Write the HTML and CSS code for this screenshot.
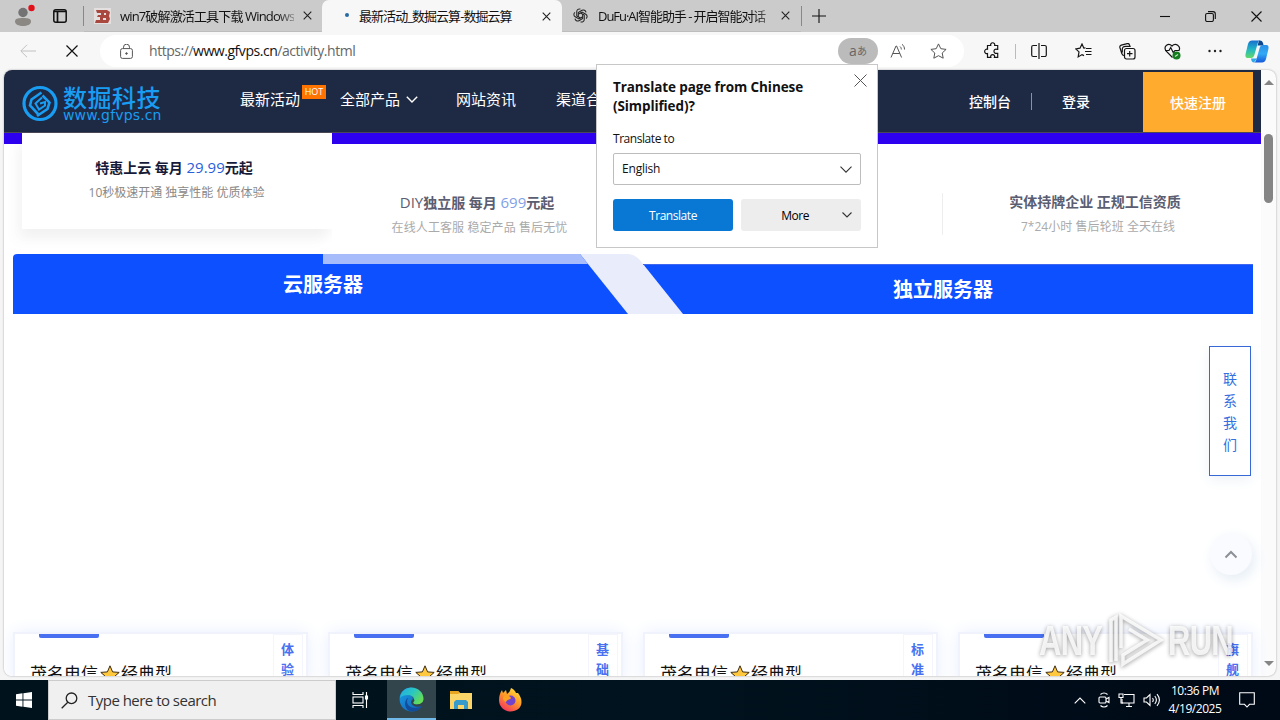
FILE: index.html
```html
<!DOCTYPE html>
<html lang="zh-CN">
<head>
<meta charset="utf-8">
<title>最新活动_数掘云算-数掘云算</title>
<link rel="stylesheet" href="styles.css">
</head>
<body>
<div class="tabbar">
  <svg class="avatar" width="22" height="24" viewBox="0 0 22 24"><circle cx="9" cy="8.500" r="4.700" fill="#737373"/><path d="M1 17.500c0-3 3-3.500 8-3.500s8 .5 8 3.500-4 4.500-8 4.500-8-1.500-8-4.500z" fill="#8b8782"/><circle cx="17.500" cy="4" r="3.200" fill="#e3101c"/></svg>
  <svg class="workspaces" width="14" height="14" viewBox="0 0 14 14"><rect x=".8" y=".8" width="12.400" height="12.400" rx="2" fill="none" stroke="#111" stroke-width="1.500"/><path d="M1 2.500h12M4.500 3v10" stroke="#111" stroke-width="1.700"/></svg>
  <i class="divider"></i>
  <div class="tab tab-one">
    <svg width="17" height="16" viewBox="0 0 17 16"><rect width="17" height="16" fill="#e4e0df"/><path fill-rule="evenodd" d="M2 2h11l3 2-1 4 1 3-2 4H1l1-3h4V9H3l1-2h3V5H3zM10 5v2h2V5zM9 10v2h3v-2z" fill="#a8483f"/></svg>
    <span class="tab-title fade">win7破解激活工具下载 Windows</span>
    <svg class="x" width="9" height="9" viewBox="0 0 9 9"><path d="M.7.7l7.600 7.600M8.300.7L.7 8.300"/></svg>
  </div>
  <div class="tab tab-active">
    <i class="loading"></i>
    <span class="tab-title">最新活动_数掘云算-数掘云算</span>
    <svg class="x" width="9" height="9" viewBox="0 0 9 9"><path d="M.7.7l7.600 7.600M8.300.7L.7 8.300"/></svg>
  </div>
  <div class="tab tab-three">
    <svg width="15" height="15" viewBox="0 0 16 16" fill="none" stroke="#222" stroke-width="1.100"><path d="M8 1.200c-2-.8-4 .6-4 2.600v4.600l4 2.300"/><path d="M8 1.200c-2-.8-4 .6-4 2.600v4.600l4 2.300" transform="rotate(60 8 8)"/><path d="M8 1.200c-2-.8-4 .6-4 2.600v4.600l4 2.300" transform="rotate(120 8 8)"/><path d="M8 1.200c-2-.8-4 .6-4 2.600v4.600l4 2.300" transform="rotate(180 8 8)"/><path d="M8 1.200c-2-.8-4 .6-4 2.600v4.600l4 2.300" transform="rotate(240 8 8)"/><path d="M8 1.200c-2-.8-4 .6-4 2.600v4.600l4 2.300" transform="rotate(300 8 8)"/></svg>
    <span class="tab-title fade">DuFu·AI智能助手 - 开启智能对话</span>
    <svg class="x" width="9" height="9" viewBox="0 0 9 9"><path d="M.7.7l7.600 7.600M8.300.7L.7 8.300"/></svg>
  </div>
  <i class="divider"></i>
  <svg class="plus" width="14" height="14" viewBox="0 0 14 14"><path d="M7 0v14M0 7h14"/></svg>
  <div class="window-buttons">
    <svg width="10" height="10" viewBox="0 0 10 10"><path d="M0 5.500h10"/></svg>
    <svg width="11" height="11" viewBox="0 0 11 11"><rect x=".6" y="2.500" width="7.800" height="8" rx="1.500"/><path d="M3 .6h5a2.300 2.300 0 0 1 2.300 2.300V8"/></svg>
    <svg width="11" height="11" viewBox="0 0 11 11"><path d="M.5.5l10 10M10.500.5l-10 10"/></svg>
  </div>
</div>

<div class="toolbar">
  <svg class="back" width="16" height="14" viewBox="0 0 16 14"><path d="M16 7H1M7 .8L.8 7 7 13.200"/></svg>
  <svg class="stop" width="12" height="12" viewBox="0 0 12 12"><path d="M.5.5l11 11M11.500.5l-11 11"/></svg>
  <div class="address">
    <svg class="lock" width="13" height="15" viewBox="0 0 13 15"><rect x=".6" y="4.600" width="11.800" height="9.800" rx="1.800"/><path d="M3.500 4.500V3.200a3 3 0 0 1 6 0v1.300"/><circle cx="6.500" cy="9.500" r=".8" fill="#555"/></svg>
    <span class="url">https://<b>www.gfvps.cn</b>/activity.html</span>
    <span class="translate-chip"><span>a</span><small>あ</small></span>
    <svg class="read" width="18" height="16" viewBox="0 0 18 16"><path d="M1 14.500L6 3h.6l5 11.500M2.800 10.500h7M10 3.500c1 .8 1.300 1.800 1.300 3M12 1.300c1.800 1.400 2.500 3 2.500 5.200"/></svg>
    <svg class="fav" width="17" height="16" viewBox="0 0 17 16"><path d="M8.500.9l2.300 4.800 5.300.7-3.900 3.600 1 5.200-4.700-2.500-4.700 2.500 1-5.200L.9 6.400l5.300-.7z"/></svg>
  </div>
  <div class="actions">
    <svg width="17" height="18" viewBox="0 0 17 18"><path d="M3.500 3.500h3.200a2.100 2.100 0 1 1 4 0h3v3.800h-1a2.100 2.100 0 1 0 0 4h1v4h-3.200a2 2 0 1 0-3.700 0H3.500v-3.800a2.200 2.200 0 1 1 0-4.200z"/></svg>
    <i></i>
    <svg width="16" height="16" viewBox="0 0 16 16"><path d="M6 2.500H2.200A1.500 1.500 0 0 0 .7 4v8a1.500 1.500 0 0 0 1.500 1.500H6M10 2.500h3.800A1.500 1.500 0 0 1 15.300 4v8a1.500 1.500 0 0 1-1.500 1.500H10M8 0v16"/></svg>
    <svg width="17" height="16" viewBox="0 0 17 16"><path d="M10.500 4.800L8.800 5 7 1 5 5.200.8 5.900l3.200 3-.8 5L7 11.600l2 1M11 5.500h5.500M10 8.500h6.500M11 11.500h5.500"/></svg>
    <svg width="17" height="17" viewBox="0 0 17 17"><rect x="5.500" y="5.500" width="10.500" height="10.500" rx="2"/><path d="M8 10.700h5.500M10.700 8v5.500M5 12.500c-1.300 0-1.800-.8-2.200-2L.9 4.500c-.4-1.400.2-2 1.300-2.400l6-1.500c1.300-.3 2 .3 2.300 1.300l.5 1.500H6.500C4.300 3.400 3.300 4.500 3.300 6.500v3"/></svg>
    <svg width="17" height="17" viewBox="0 0 17 17"><path d="M8.500 14.500L2 8C-1 3 4.500-.8 8 3c3.500-3.800 9.500 0 6.800 5M1 7.500h4l1.700-3 2.500 5L11 7.500h4.500"/><circle cx="12.500" cy="12.500" r="4" fill="#167c20" stroke="none"/><path d="M11 13.500l3-2" stroke="#bcebc0"/></svg>
    <svg width="14" height="4" viewBox="0 0 14 4"><g fill="#222" stroke="none"><circle cx="1.500" cy="2" r="1.200"/><circle cx="7" cy="2" r="1.200"/><circle cx="12.500" cy="2" r="1.200"/></g></svg>
    <svg width="24" height="23" viewBox="0 0 24 23" class="copilot"><defs><linearGradient id="ca" x1="0" y1="0" x2="0" y2="1"><stop offset="0" stop-color="#176fce"/><stop offset=".5" stop-color="#21b7c6"/><stop offset="1" stop-color="#62d969"/></linearGradient><linearGradient id="cb" x1="0" y1="0" x2="0" y2="1"><stop offset="0" stop-color="#2a8fe8"/><stop offset=".5" stop-color="#33aaf4"/><stop offset="1" stop-color="#1558dc"/></linearGradient></defs><path d="M14 .5c3 0 4 1 4.500 5h-6z" fill="#0c478f"/><path d="M9 22.500c-2 0-2.500-1.500-3-4h6z" fill="#2fa8e8"/><path d="M7 .5h8c-1.500.5-2 1.500-2.500 3.500L9.500 14.500c-.6 2.200-1.500 3.500-3.500 3.500H3C.5 18 0 16 .7 13.500L3 4C4 1.300 5 .5 7 .5z" fill="url(#ca)"/><path d="M17 22.500H9c1.500-.5 2-1.500 2.500-3.500l3-10.500C15.100 6.300 16 5 18 5h3c2.500 0 3 2 2.300 4.500L21 19c-1 2.700-2 3.500-4 3.500z" fill="url(#cb)"/></svg>
  </div>
</div>

<div class="viewport">
  <div class="page">
    <header class="site-header">
      <div class="logo">
        <svg width="36" height="37" viewBox="0 0 36 37" fill="none"><circle cx="18" cy="18.500" r="16" stroke="#189df3" stroke-width="3.200"/><path d="M19.500 7.500L9.500 14.500 8 20.500l8 8.500M15 31l10.500-7 2-6.500-7-7" stroke="#189df3" stroke-width="2.600"/><path d="M20 12.500l-6.500 6 3.500 6 6-4v-3.500l-5 1.500" stroke="#189df3" stroke-width="2"/></svg>
        <div class="logo-text"><strong>数掘科技</strong><span>www.gfvps.cn</span></div>
      </div>
      <nav>
        <a>最新活动<em>HOT</em></a>
        <a>全部产品<svg width="12" height="7" viewBox="0 0 12 7"><path d="M.8.8L6 6 11.200.8"/></svg></a>
        <a>网站资讯</a>
        <a>渠道合作</a>
      </nav>
      <div class="account"><a>控制台</a><i></i><a>登录</a><a class="register">快速注册</a></div>
    </header>
    <section class="features">
      <div class="feature raised"><h3>特惠上云 每月 <span>29.99</span>元起</h3><p>10秒极速开通 独享性能 优质体验</p></div>
      <div class="feature second"><h3><span class="latin">DIY</span>独立服 每月 <span>699</span>元起</h3><p>在线人工客服 稳定产品 售后无忧</p></div>
      <div class="feature"></div>
      <div class="feature last"><h3>实体持牌企业 正规工信资质</h3><p>7*24小时 售后轮班 全天在线</p></div>
    </section>
    <section class="products">
      <svg class="product-bg" width="1240" height="60" viewBox="0 0 1240 60"><path d="M567 0h46c8 0 12 3 17 10l40 50h-60z" fill="#e9edfb"/><path d="M4 0h563l48 60H0V4a4 4 0 0 1 4-4z" fill="#0d50ff"/><path d="M310 0h257l8 10H310z" fill="#a7bdfb"/><path d="M630 10h610v50H670z" fill="#0d50ff"/><path d="M630 10.500h610" stroke="#4068ef"/></svg>
      <div class="product-labels"><h2>云服务器</h2><h2>独立服务器</h2></div>
    </section>
    <section class="plans">
      <article class="plan"><div class="plan-main"><i></i><h4>茂名电信<svg width="20" height="19" viewBox="0 0 20 19"><path d="M10 .8l2.600 6.100 6.600.5-5 4.400 1.500 6.400-5.700-3.400-5.700 3.400 1.500-6.400-5-4.400 6.600-.5z"/></svg>经典型</h4></div><aside>体验</aside></article>
      <article class="plan"><div class="plan-main"><i></i><h4>茂名电信<svg width="20" height="19" viewBox="0 0 20 19"><path d="M10 .8l2.600 6.100 6.600.5-5 4.400 1.500 6.400-5.700-3.400-5.700 3.400 1.500-6.400-5-4.400 6.600-.5z"/></svg>经典型</h4></div><aside>基础</aside></article>
      <article class="plan"><div class="plan-main"><i></i><h4>茂名电信<svg width="20" height="19" viewBox="0 0 20 19"><path d="M10 .8l2.600 6.100 6.600.5-5 4.400 1.500 6.400-5.700-3.400-5.700 3.400 1.500-6.400-5-4.400 6.600-.5z"/></svg>经典型</h4></div><aside>标准</aside></article>
      <article class="plan"><div class="plan-main"><i></i><h4>茂名电信<svg width="20" height="19" viewBox="0 0 20 19"><path d="M10 .8l2.600 6.100 6.600.5-5 4.400 1.500 6.400-5.700-3.400-5.700 3.400 1.500-6.400-5-4.400 6.600-.5z"/></svg>经典型</h4></div><aside>旗舰</aside></article>
    </section>
    <div class="contact">联系我们</div>
    <div class="to-top"><svg width="14" height="9" viewBox="0 0 14 9"><path d="M1.500 7.500L7 2l5.500 5.500"/></svg></div>
  </div>
  <div class="scrollbar"><b class="up"></b><i></i><b class="down"></b></div>
</div>

<footer class="taskbar">
  <div class="start"><svg width="16" height="16" viewBox="0 0 16 16"><path d="M0 2.200L6.500 1.300V7.500H0zM7.400 1.200L16 0v7.500H7.400zM0 8.500h6.500v6.200L0 13.800zM7.400 8.500H16V16l-8.600-1.200z" fill="#fff"/></svg></div>
  <div class="search"><svg width="17" height="17" viewBox="0 0 17 17"><circle cx="10.500" cy="6.300" r="5.300"/><path d="M6.800 10.200L.7 16.300"/></svg><span>Type here to search</span></div>
  <div class="task"><svg width="17" height="16" viewBox="0 0 17 16" fill="none" stroke="#fff" stroke-width="1.100"><path d="M1 0v2.500h10V0M1 16v-2.500h10V16M14.500 0v16"/><rect x="1" y="5" width="10" height="6"/><path d="M13.500 4h2v3h-2z" fill="#fff"/></svg></div>
  <div class="task current"><svg width="25" height="25" viewBox="0 0 25 25"><defs><linearGradient id="ea" x1="0" y1="0" x2="1" y2=".6"><stop offset="0" stop-color="#26a9e8"/><stop offset=".5" stop-color="#28c6c4"/><stop offset="1" stop-color="#65dc55"/></linearGradient><linearGradient id="eb" x1="0" y1="0" x2="1" y2="1"><stop offset="0" stop-color="#1ba0e6"/><stop offset="1" stop-color="#1059b0"/></linearGradient></defs><path d="M.6 12C.6 5 6 .5 12.500.5L14 14l8.500 5.500C20 23 16.500 24.500 12.500 24.500 6 24.500.6 19.500.6 12z" fill="url(#eb)"/><path d="M1 11C2 4 7 .5 12.500.5c7 0 12 5.500 12 11 0 4-3 6-6.500 6-3 0-4.500-1.200-3.500-2.700C16 12 14 8 9.500 8 5.500 8 2 9 1 11z" fill="url(#ea)"/><path d="M9.500 10.500C6 15 9 21 16 21c3 0 5-.7 6.500-2-3 5.500-9 6.300-13 4.500C4.500 20 5.500 12.500 9.500 10.500z" fill="#124c9a"/><path d="M14.500 14.800c-1 1.500.5 2.700 3.500 2.700 2 0 4-.7 5.300-2l-.8 3.500c-5 2-10 0-10.500-4 .5-2 2-3.500 3-2.500s.2 1.500-.5 2.300z" fill="#32444c"/></svg></div>
  <div class="task"><svg width="22" height="20" viewBox="0 0 22 20"><path d="M0 1h8l2 2h12v16H0z" fill="#fbd568"/><path d="M0 1h8l2 2-2 1H0z" fill="#e8a520"/><path d="M4 19v-7l2-2h10l2 2v7h-4v-4H8v4z" fill="#379ccc"/></svg></div>
  <div class="task"><svg width="24" height="24" viewBox="0 0 24 24"><defs><linearGradient id="fa" x1=".8" y1="0" x2=".2" y2="1"><stop offset="0" stop-color="#ffe23e"/><stop offset=".45" stop-color="#ff9b27"/><stop offset="1" stop-color="#f52d63"/></linearGradient></defs><path d="M1 12c0-4 1-7 3-10l1 3 3-3 1 4c2-1 3-3 4-6 3 1 4 3 5 5l2 0c2 3 3.500 5 3.500 9 0 6-5 9.500-11 9.500S1 19 1 12z" fill="url(#fa)"/><circle cx="12.500" cy="12.500" r="5" fill="#7443cb"/><path d="M6 8c3-1 6 0 7 2-1 2-4 1-5 4-3-1-4-4-2-6z" fill="#ffa21f"/></svg></div>
  <div class="tray">
    <svg width="12" height="7" viewBox="0 0 12 7"><path d="M.7 6.300L6 1l5.300 5.300"/></svg>
    <svg width="12" height="16" viewBox="0 0 12 16"><path d="M2.500 2.500c2-2 5-2 7 0M2.500 13.500c2 2 5 2 7 0M8 7l3-1.500v5L8 9"/><rect x="1" y="5" width="7" height="6" rx="1"/></svg>
    <svg width="17" height="14" viewBox="0 0 17 14"><path d="M6 1.500h10V10H4V6M8 13.500h6M11 10v3.500"/><path d="M1 1h4v3.500H1zM3 4.500V10h2"/></svg>
    <svg width="17" height="14" viewBox="0 0 17 14"><path d="M1 5h2.500L7 1.500v11L3.500 9H1zM9.500 5c1 1.300 1 2.700 0 4M11.800 3c2 2.500 2 5.500 0 8M14 1.200c3 3.600 3 8 0 11.600"/></svg>
    <time><span>10:36 PM</span><span>4/19/2025</span></time>
    <svg width="16" height="16" viewBox="0 0 16 16"><path d="M.7.7h14.600v11.600H10.500L8 15l-2.500-2.700H.7z"/></svg>
  </div>
</footer>

<div class="popup">
  <h1>Translate page from Chinese (Simplified)?</h1>
  <svg class="popup-x" width="13" height="13" viewBox="0 0 13 13"><path d="M.5.5l12 12M12.500.5l-12 12"/></svg>
  <label>Translate to</label>
  <div class="select"><span>English</span><svg width="12" height="7" viewBox="0 0 12 7"><path d="M.5.7L6 6.200 11.500.7"/></svg></div>
  <div class="popup-buttons"><button class="primary">Translate</button><button class="more"><span>More</span><svg width="10" height="6" viewBox="0 0 10 6"><path d="M.5.5L5 5 9.500.5"/></svg></button></div>
</div>

<div class="watermark"><span>ANY</span><svg width="58" height="56" viewBox="0 0 58 56"><path d="M4 50V8l5-3v44M14 36V4l40 24-38 24v-9l24-15L22 17" /></svg><span>RUN</span></div>
</body>
</html>
```
FILE: styles.css
```css
* { box-sizing: border-box; }
body { margin: 0; width: 1280px; height: 720px; overflow: hidden; position: relative; display: flex; flex-direction: column; background: #f5f5f6; font: 13px/1.2 "Open Sans", "Noto Sans", "Noto Sans CJK SC", sans-serif; color: #111; }
svg { flex: none; display: block; }
h1, h2, h3, h4, p { margin: 0; }

.tabbar { flex: none; height: 32px; display: flex; align-items: center; background: #cbcbcb; }
.avatar { margin: 0 0 0 14px; }
.workspaces { margin-left: 17px; }
.divider { width: 1px; height: 20px; margin-left: 16px; background: #888; }
.tab { height: 32px; display: flex; align-items: center; }
.tab-one { width: 238px; padding-left: 10px; border-bottom: 1px solid #bdbdbd; }
.tab-one .tab-title { width: 174px; margin-left: 9px; letter-spacing: -.85px; }
.tab-title { white-space: nowrap; overflow: hidden; font-size: 13px; line-height: 20px; }
.fade { -webkit-mask-image: linear-gradient(90deg, #000 90%, #0005); mask-image: linear-gradient(90deg, #000 90%, #0005); }
.x { margin-left: 9px; stroke: #222; stroke-width: 1.1; }
.tab-active { width: 240px; background: #f7f7f7; border-radius: 7px 7px 0 0; padding-left: 23px; }
.loading { width: 4px; height: 4px; border-radius: 50%; background: #276ba2; margin-top: -3px; }
.tab-active .tab-title { width: 176px; margin-left: 10px; letter-spacing: -.95px; }
.tab-active .x { margin-left: 7px; }
.tab-three { width: 239px; padding-left: 11px; border-bottom: 1px solid #bdbdbd; }
.tab-three .tab-title { width: 174px; margin-left: 10px; letter-spacing: -1.05px; }
.tab-three + .divider { margin-left: 0; }
.plus { margin-left: 10px; stroke: #111; stroke-width: 1.1; }
.window-buttons { margin-left: auto; padding-right: 18px; display: flex; align-items: center; gap: 35px; }
.window-buttons svg { fill: none; stroke: #111; stroke-width: 1.1; }

.toolbar { flex: none; height: 38px; display: flex; align-items: center; background: #f7f7f7; }
.back { margin-left: 20px; fill: none; stroke: #c1c1c1; }
.stop { margin-left: 30px; stroke: #111; stroke-width: 1.2; }
.address { width: 864px; height: 32px; margin-left: 22px; padding-left: 20px; border-radius: 16px; background: #fff; display: flex; align-items: center; }
.lock, .read, .fav { fill: none; stroke: #555; }
.url { width: 689px; margin-left: 16px; font-size: 14px; line-height: 20px; letter-spacing: -.46px; color: #666; white-space: nowrap; }
.url b { color: #111; font-weight: 400; }
.translate-chip { width: 40px; height: 26px; display: flex; justify-content: center; align-items: center; border-radius: 13px; background: #bbb; color: #666; font-size: 14px; }
.translate-chip small { font-size: 10px; }
.read { margin-left: 12px; }
.fav { margin-left: 22px; }
.actions { display: flex; align-items: center; padding-left: 20px; }
.actions svg { fill: none; stroke: #151515; stroke-width: 1.2; margin-right: 27.500px; }
.actions svg:first-child { margin-right: 14px; }
.actions i { width: 1px; height: 15px; background: #bbb; margin-right: 15px; }
.actions svg:nth-last-child(2) { margin-right: 23px; }
.actions .copilot { margin-right: 0; stroke: none; }

.viewport { flex: none; width: 1272px; height: 606px; margin-left: 4px; display: flex; overflow: hidden; background: #fbfbfc; border-radius: 8px; box-shadow: 0 0 2px #9a9a9a; }
.page { width: 1257px; position: relative; background: #fff; }
.site-header { height: 63px; display: flex; background: #1e2944; color: #fff; border-bottom: 1px solid #4a4756; }
.logo { width: 230px; padding: 15px 0 0 18px; display: flex; gap: 5px; color: #189df3; }
.logo-text strong { display: block; width: 110px; font: 500 24px/24px "Noto Sans CJK SC", sans-serif; letter-spacing: .5px; white-space: nowrap; }
.logo-text span { display: block; font: 14px/13px "DejaVu Sans", sans-serif; letter-spacing: .15px; }
nav { width: 650px; display: flex; font: 15px/60px "Noto Sans CJK SC", sans-serif; }
nav a { position: relative; display: flex; align-items: center; width: 100px; height: 58px; margin-left: 6px; white-space: nowrap; }
nav a:nth-child(2) { width: 115px; margin-left: 0; }
nav a:nth-child(3) { margin-left: 0; padding-left: 1px; }
nav a:nth-child(4) { margin-left: 1px; }
nav a svg { margin-left: 6px; fill: none; stroke: #fff; stroke-width: 1.4; }
nav em { position: absolute; left: 62px; top: 15px; width: 24px; height: 14px; background: #ff7300; font: 9px/14px "Open Sans", sans-serif; text-align: center; }
.account { display: flex; align-items: center; font: 500 14px/60px "Noto Sans CJK SC", sans-serif; width: 377px; padding-left: 85px; }
.account i { width: 1px; height: 17px; margin: 0 30px 0 20px; background: #8a919f; }
.account .register { width: 110px; height: 60px; margin: 2px 0 0 53px; background: #ffab2e; text-align: center; }

.features { height: 121px; padding-left: 9px; display: grid; grid-template-columns: 319px 305px 305px 311px; background: linear-gradient(#2d00ef 0 11px, #fff 11px); }
.feature { margin-top: 11px; padding-top: 45px; text-align: center; background: #fff; }
.feature h3 { font: 700 14px/26px "Open Sans", "Noto Sans CJK SC", sans-serif; color: #5b5d71; white-space: nowrap; }
.feature h3 span { color: #7f9fe8; font-weight: 400; font-size: 15px; }
.feature h3 .latin { color: inherit; }
.feature p { font: 12px/24px "Open Sans", "Noto Sans CJK SC", sans-serif; color: #aaa; white-space: nowrap; }
.feature.second { padding-right: 15px; }
.feature.second p { letter-spacing: .1px; padding-left: 5px; }
.feature.raised { height: 96px; margin: 0 0 0 9px; padding: 21px 6px 0 0; box-shadow: 0 7px 12px #0000000b, -9px 14px 12px #00000005; }
.raised h3 { color: #171b3a; }
.raised h3 span { color: #2860db; }
.raised p { color: #888; padding-left: 5px; }
.feature.last { height: 42px; margin-top: 60px; padding: 0 6px 0 0; border-left: 1px solid #eee; }
.feature.last h3 { margin-top: -4px; }
.feature.last p { padding-left: 6px; letter-spacing: .05px; }

.products { padding-left: 9px; height: 60px; display: grid; }
.product-bg, .product-labels { grid-area: 1 / 1; }
.product-labels { display: grid; grid-template-columns: 620px 620px; }
.products h2 { font: 700 20px/60px "Noto Sans CJK SC", sans-serif; color: #fff; text-align: center; }
.products h2:last-child { padding-top: 5px; }
.plans { height: 44px; margin-top: 318px; padding-left: 9px; display: grid; grid-template-columns: repeat(4, 295px); gap: 20px; }
.plan { height: 54px; display: flex; border: 2px solid #f0f2fc; background: #fff; box-shadow: 0 0 16px #e8efff; }
.plan-main { width: 258px; padding: 0 0 0 15px; }
.plan-main > i { display: block; width: 60px; height: 4px; margin-left: 9px; background: #4870f0; border-radius: 0 0 2px 2px; }
.plan h4 { display: flex; align-items: center; margin-top: 22px; font: 17px/26px "Noto Sans CJK SC", sans-serif; white-space: nowrap; }
.plan h4 svg { margin: 2px 1px 0 2px; fill: #ffc83d; stroke: #3d2a10; }
.plan aside { width: 30px; padding: 4px 7px; border: 1px solid #f4f5fd; color: #4870f0; font: 700 13px/20px "Noto Sans CJK SC", sans-serif; }
.contact { position: absolute; left: 1205px; top: 276px; width: 42px; height: 130px; padding: 20px 13px; border: 1px solid #3867d6; background: #fff; color: #3470df; font: 14px/22px "Noto Sans CJK SC", sans-serif; box-shadow: 0 4px 14px #edf2f7; }
.to-top { position: absolute; left: 1206px; top: 463px; width: 42px; height: 42px; border-radius: 50%; background: #fafbfe; box-shadow: 3px 5px 14px #e5edf5; display: grid; place-items: center; }
.to-top svg { fill: none; stroke: #8c9197; stroke-width: 2; }
.scrollbar { width: 15px; display: flex; flex-direction: column; align-items: center; }
.scrollbar i { width: 9px; height: 69px; margin-top: 49px; border-radius: 5px; background: #858585; }
.up, .down { border: 5px solid transparent; border-top: 0; border-bottom: 5px solid #858585; margin-top: 10px; }
.down { transform: rotate(180deg); margin: auto 0 10px; }

.taskbar { flex: none; height: 40px; margin-top: 4px; display: flex; background: linear-gradient(90deg, #00131c, #00131e 50%, #000916); }
.start { width: 48px; display: grid; place-items: center; }
.search { width: 288px; padding-left: 12px; display: flex; align-items: center; background: #f0f0f0; border: 1px solid #ccc; font-size: 15px; color: #333; }
.search svg { fill: none; stroke: #222; stroke-width: 1.3; }
.search span { margin-left: 10px; letter-spacing: -.52px; }
.task { width: 51px; padding-right: 3px; display: grid; place-items: center; }
.task + .task { width: 49px; padding: 0; }
.task.current { background: #32444c; border-bottom: 2px solid #70b9e8; }
.tray { margin-left: auto; padding-right: 25px; display: flex; align-items: center; color: #fff; }
.tray svg { fill: none; stroke: #fff; stroke-width: 1.1; margin-right: 8px; }
.tray svg:first-child { margin-right: 12px; }
.tray time { width: 54px; margin-right: 17px; display: flex; flex-direction: column; align-items: center; font-size: 12px; line-height: 18px; letter-spacing: -.45px; white-space: nowrap; }
.tray svg:last-child { margin-right: 0; }

.popup { position: absolute; left: 596px; top: 64px; width: 282px; height: 184px; padding: 13px 16px; border: 1px solid #c7c7c7; background: #fff; }
.popup h1 { width: 215px; font-size: 13.500px; line-height: 19px; letter-spacing: -.1px; font-weight: 700; }
.popup-x { position: absolute; left: 257px; top: 9px; stroke: #555; }
.popup label { display: block; margin-top: 14px; font-size: 12px; line-height: 18px; letter-spacing: -.45px; }
.select { margin-top: 5px; height: 32px; padding: 0 8px; display: flex; align-items: center; justify-content: space-between; border: 1px solid #bdbdbd; border-radius: 2px; font-size: 12px; letter-spacing: -.2px; }
.select svg, .more svg { fill: none; stroke: #333; stroke-width: 1.1; }
.popup-buttons { display: flex; gap: 8px; margin-top: 14px; }
.popup button { width: 120px; height: 32px; padding: 0; border: 0; border-radius: 3px; font: 12px "Open Sans", sans-serif; letter-spacing: -.45px; }
.popup .primary { background: #0878d4; color: #fff; }
.popup .more { display: flex; align-items: center; justify-content: flex-end; background: #ededed; padding-right: 9px; gap: 33px; }
.watermark { position: absolute; left: 1039px; top: 609px; display: grid; grid-template-columns: 68px 61px 62px; align-items: center; color: #ffffffd0; font: 700 43px/62px "Liberation Sans", sans-serif; filter: drop-shadow(0 1px 2px #0007); }
.watermark span { transform: scaleX(.72); transform-origin: left; white-space: nowrap; letter-spacing: -1px; }
.watermark svg { fill: none; stroke: #ffffffd0; stroke-width: 3.5; }
```
